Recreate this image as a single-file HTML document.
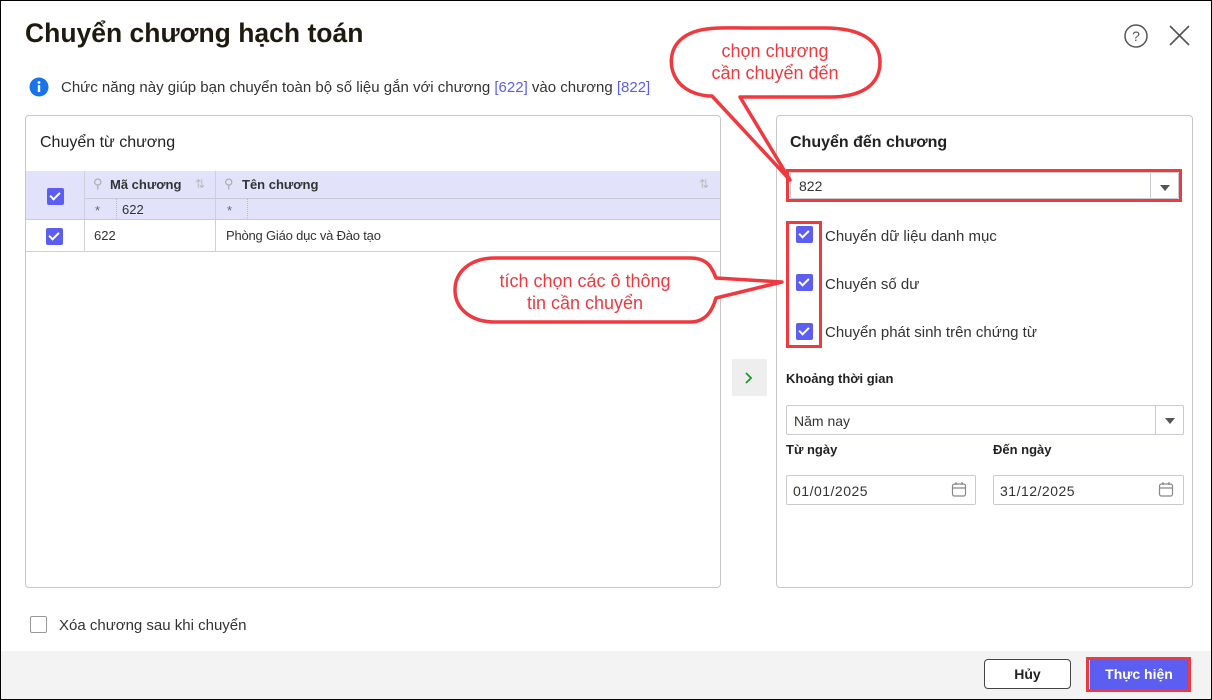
<!DOCTYPE html>
<html><head><meta charset="utf-8"><style>
*{box-sizing:border-box;margin:0;padding:0}
body{width:1212px;height:700px;position:relative;overflow:hidden;background:#fff;font-family:"Liberation Sans",sans-serif;color:#222}
.a{position:absolute}
.t{white-space:nowrap}
.cb{position:absolute;width:17px;height:17px;background:#5b5ef0;border-radius:2px}
.cb:after{content:"";position:absolute;left:5px;top:2px;width:4px;height:8px;border:solid #fff;border-width:0 2px 2px 0;transform:rotate(45deg)}
.box{position:absolute;border:1px solid #c8c8c8;border-radius:4px}
.inp{position:absolute;border:1px solid #c9c9d0;border-radius:2px;font-size:14px;color:#333}
.dd{position:absolute;right:0;top:0;bottom:0;width:28px;border-left:1px solid #c9c9d0}
.dd:after{content:"";position:absolute;left:9px;top:12px;border:5px solid transparent;border-top:6px solid #555;border-bottom:0}
</style></head><body>
<div class="a" style="left:0;top:0;width:1212px;height:700px;border:1px solid #000;z-index:5;pointer-events:none"></div>
<div class="a t" style="left:25px;top:18px;font-size:26.5px;font-weight:bold;color:#1e1a10">Chuyển chương hạch toán</div>
<svg class="a" style="left:1122px;top:22px" width="70" height="30"><circle cx="14" cy="14" r="11" fill="none" stroke="#555" stroke-width="1.5"/><text x="14" y="19" font-size="14" text-anchor="middle" fill="#555" font-family="Liberation Sans">?</text><path d="M48 4L67 23M67 4L48 23" stroke="#555" stroke-width="1.6"/></svg>
<svg class="a" style="left:29px;top:77px" width="20" height="20"><circle cx="10" cy="10" r="9.5" fill="#1a73e8"/><rect x="8.8" y="8" width="2.4" height="7" fill="#fff"/><circle cx="10" cy="5.5" r="1.4" fill="#fff"/></svg>
<div class="a t" style="left:61px;top:79px;font-size:15px;color:#333">Chức năng này giúp bạn chuyển toàn bộ số liệu gắn với chương <span style="color:#5b5ef0">[622]</span> vào chương <span style="color:#5b5ef0">[822]</span></div>

<div class="box" style="left:25px;top:115px;width:696px;height:473px"></div>
<div class="a t" style="left:40px;top:134px;font-size:16px;color:#222">Chuyển từ chương</div>
<div class="a" style="left:26px;top:171px;width:694px;height:49px;background:#e2e3fb;border-bottom:1px solid #c8c8d8"></div>
<div class="a" style="left:84px;top:198px;width:636px;height:1px;background:#c8c8d8"></div>
<div class="a" style="left:84px;top:171px;width:1px;height:80px;background:#cfcfdc"></div>
<div class="a" style="left:215px;top:171px;width:1px;height:80px;background:#cfcfdc"></div>
<div class="a" style="left:26px;top:251px;width:694px;height:1px;background:#d0d0d0"></div>
<div class="cb" style="left:47px;top:188px"></div>
<div class="cb" style="left:46px;top:228px"></div>
<div class="a t" style="left:93px;top:176px;font-size:13px;color:#aaa">⚲</div>
<div class="a t" style="left:110px;top:177px;font-size:13px;font-weight:bold;color:#333">Mã chương</div>
<div class="a t" style="left:195px;top:177px;font-size:12px;color:#bbb">⇅</div>
<div class="a t" style="left:224px;top:176px;font-size:13px;color:#aaa">⚲</div>
<div class="a t" style="left:242px;top:177px;font-size:13px;font-weight:bold;color:#333">Tên chương</div>
<div class="a t" style="left:699px;top:177px;font-size:12px;color:#bbb">⇅</div>
<div class="a t" style="left:95px;top:203px;font-size:13px;color:#666">*</div>
<div class="a" style="left:116px;top:199px;width:1px;height:21px;border-left:1px dotted #bbb"></div>
<div class="a t" style="left:122px;top:202px;font-size:13px;color:#333">622</div>
<div class="a t" style="left:227px;top:203px;font-size:13px;color:#666">*</div>
<div class="a" style="left:247px;top:199px;width:1px;height:21px;border-left:1px dotted #bbb"></div>
<div class="a t" style="left:94px;top:228px;font-size:13px;color:#333">622</div>
<div class="a t" style="left:226px;top:228px;font-size:13px;color:#333;letter-spacing:-.2px">Phòng Giáo dục và Đào tạo</div>

<div class="a" style="left:732px;top:359px;width:35px;height:37px;background:#eee"></div>
<svg class="a" style="left:743px;top:371px" width="12" height="14"><path d="M3 2L8 7L3 12" fill="none" stroke="#1a9a2a" stroke-width="1.8"/></svg>

<div class="box" style="left:776px;top:115px;width:417px;height:473px"></div>
<div class="a t" style="left:790px;top:134px;font-size:16px;font-weight:bold;color:#222">Chuyển đến chương</div>
<div class="a" style="left:786px;top:169px;width:396px;height:33px;border:3px solid #f0393f"></div>
<div class="inp" style="left:790px;top:172px;width:389px;height:27px"><span class="a" style="left:8px;top:5px">822</span><div class="dd"></div></div>
<div class="a" style="left:786px;top:221px;width:36px;height:127px;border:3px solid #f0393f"></div>
<div class="cb" style="left:796px;top:226px"></div>
<div class="cb" style="left:796px;top:274px"></div>
<div class="cb" style="left:796px;top:323px"></div>
<div class="a t" style="left:825px;top:228px;font-size:15px;color:#333">Chuyển dữ liệu danh mục</div>
<div class="a t" style="left:825px;top:276px;font-size:15px;color:#333">Chuyển số dư</div>
<div class="a t" style="left:825px;top:324px;font-size:15px;color:#333">Chuyển phát sinh trên chứng từ</div>
<div class="a t" style="left:786px;top:371px;font-size:13px;font-weight:bold;color:#222">Khoảng thời gian</div>
<div class="inp" style="left:786px;top:405px;width:398px;height:30px"><span class="a" style="left:7px;top:7px">Năm nay</span><div class="dd"></div></div>
<div class="a t" style="left:786px;top:442px;font-size:13px;font-weight:bold;color:#222">Từ ngày</div>
<div class="a t" style="left:993px;top:442px;font-size:13px;font-weight:bold;color:#222">Đến ngày</div>
<div class="inp" style="left:786px;top:475px;width:190px;height:30px"><span class="a" style="left:6px;top:7px;letter-spacing:.5px">01/01/2025</span></div>
<div class="inp" style="left:993px;top:475px;width:191px;height:30px"><span class="a" style="left:6px;top:7px;letter-spacing:.5px">31/12/2025</span></div>
<svg class="a" style="left:951px;top:481px" width="16" height="17"><rect x="1.5" y="3" width="13" height="12" rx="2" fill="none" stroke="#888" stroke-width="1.2"/><path d="M1.5 7H14.5M5 1V4M11 1V4" stroke="#888" stroke-width="1.2"/></svg>
<svg class="a" style="left:1158px;top:481px" width="16" height="17"><rect x="1.5" y="3" width="13" height="12" rx="2" fill="none" stroke="#888" stroke-width="1.2"/><path d="M1.5 7H14.5M5 1V4M11 1V4" stroke="#888" stroke-width="1.2"/></svg>

<div class="a" style="left:30px;top:616px;width:17px;height:17px;border:1px solid #999;border-radius:2px"></div>
<div class="a t" style="left:59px;top:617px;font-size:15px;color:#333">Xóa chương sau khi chuyển</div>

<div class="a" style="left:0;top:651px;width:1212px;height:49px;background:#f3f3f3"></div>
<div class="a" style="left:984px;top:659px;width:87px;height:30px;border:1px solid #444;border-radius:4px;background:#fff;font-size:14px;font-weight:bold;text-align:center;line-height:28px">Hủy</div>
<div class="a" style="left:1086px;top:657px;width:105px;height:35px;border:3px solid #f0393f"></div>
<div class="a" style="left:1090px;top:660px;width:98px;height:29px;background:#5b5ef0;color:#fff;font-size:14px;font-weight:bold;text-align:center;line-height:29px">Thực hiện</div>

<svg class="a" style="left:0;top:0" width="1212" height="700">
<path d="M708 96 C670 92 666 60 676 45 C690 25 720 28 745 28 L825 28 C860 28 880 40 880 62 C880 86 860 97 830 97 L740 97 L790 180 L712 96 Z" fill="#fff" stroke="#f0393f" stroke-width="3.5" stroke-linejoin="round"/>
<text x="775" y="57" font-size="18" fill="#f0393f" text-anchor="middle" font-family="Liberation Sans">chọn chương</text>
<text x="775" y="79" font-size="18" fill="#f0393f" text-anchor="middle" font-family="Liberation Sans">cần chuyển đến</text>
<path d="M495 258 L690 258 C708 258 712 268 716 278 L782 282 L716 298 C712 312 705 322 690 322 L495 322 C470 322 455 308 455 290 C455 272 470 258 495 258 Z" fill="#fff" stroke="#f0393f" stroke-width="3.5" stroke-linejoin="round"/>
<text x="585" y="287" font-size="18" fill="#f0393f" text-anchor="middle" font-family="Liberation Sans">tích chọn các ô thông</text>
<text x="585" y="309" font-size="18" fill="#f0393f" text-anchor="middle" font-family="Liberation Sans">tin cần chuyển</text>
</svg>
</body></html>
